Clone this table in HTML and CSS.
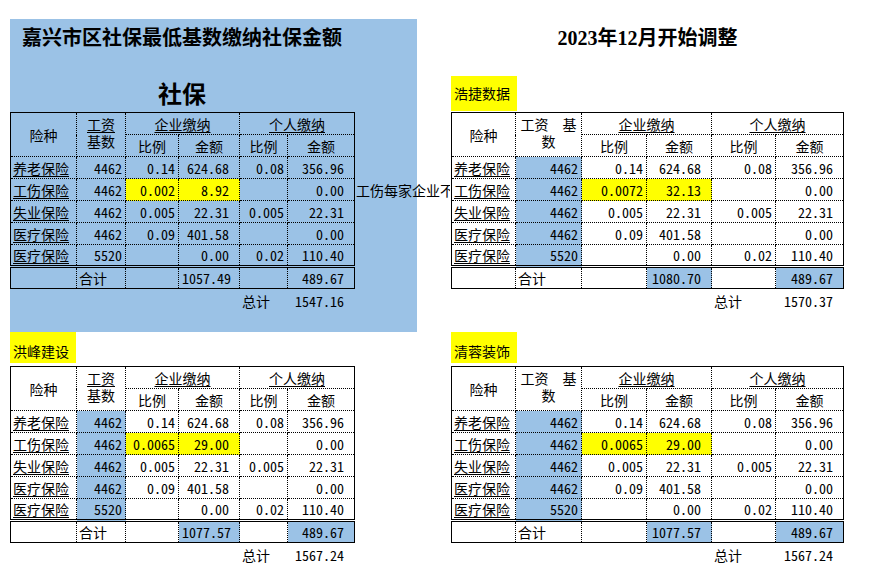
FILE: index.html
```html
<!DOCTYPE html>
<html lang="zh-CN">
<head>
<meta charset="utf-8">
<title>嘉兴市区社保最低基数缴纳社保金额</title>
<link rel="stylesheet" href="styles.css">
</head>
<body>
<div class="page">
  <section class="panel">
    <div class="title narrow-w">嘉兴市区社保最低基数缴纳社保金额</div>
    <div class="subtitle narrow-w">社保</div>
    <table class="sheet sheet-n plain">
      <colgroup><col class="n1"><col class="n2"><col class="n3"><col class="n4"><col class="n5"><col class="n6"></colgroup>
      <tr><td rowspan="2" class="hc">险种</td><td rowspan="2" class="hc two"><u>工资</u><br>基数</td><td colspan="2" class="hc"><u>企业缴纳</u></td><td colspan="2" class="hc"><u>个人缴纳</u></td></tr>
      <tr><td class="hc">比例</td><td class="hc">金额</td><td class="hc">比例</td><td class="hc">金额</td></tr>
      <tr><td class="lbl"><u>养老保险</u></td><td class="n">4462</td><td class="n">0.14</td><td class="n amt">624.68</td><td class="n">0.08</td><td class="n amt">356.96</td></tr>
      <tr><td class="lbl"><u>工伤保险</u></td><td class="n">4462</td><td class="n hl">0.002</td><td class="n amt hl">8.92</td><td class="n"></td><td class="n amt note-cell">0.00<span class="note">工伤每家企业不</span></td></tr>
      <tr><td class="lbl"><u>失业保险</u></td><td class="n">4462</td><td class="n">0.005</td><td class="n amt">22.31</td><td class="n">0.005</td><td class="n amt">22.31</td></tr>
      <tr><td class="lbl"><u>医疗保险</u></td><td class="n">4462</td><td class="n">0.09</td><td class="n amt">401.58</td><td class="n"></td><td class="n amt">0.00</td></tr>
      <tr><td class="lbl"><u>医疗保险</u></td><td class="n">5520</td><td class="n"></td><td class="n amt">0.00</td><td class="n">0.02</td><td class="n amt">110.40</td></tr>
      <tr class="sum"><td></td><td class="lbl">合计</td><td></td><td class="n amt">1057.49</td><td></td><td class="n amt">489.67</td></tr>
    </table>
    <div class="grand grand-n"><span></span><span class="gl">总计</span><span class="gv">1547.16</span></div>
  </section>

  <section class="col">
    <div class="title">2023年12月开始调整</div>
    <div class="tag tag-top">浩捷数据</div>
    <table class="sheet sheet-w">
      <colgroup><col class="w1"><col class="w2"><col class="w3"><col class="w4"><col class="w5"><col class="w6"></colgroup>
      <tr><td rowspan="2" class="hc">险种</td><td rowspan="2" class="hc two">工资　基<br>数</td><td colspan="2" class="hc"><u>企业缴纳</u></td><td colspan="2" class="hc"><u>个人缴纳</u></td></tr>
      <tr><td class="hc">比例</td><td class="hc">金额</td><td class="hc">比例</td><td class="hc">金额</td></tr>
      <tr><td class="lbl"><u>养老保险</u></td><td class="n bl">4462</td><td class="n">0.14</td><td class="n amt">624.68</td><td class="n">0.08</td><td class="n amt">356.96</td></tr>
      <tr><td class="lbl"><u>工伤保险</u></td><td class="n bl">4462</td><td class="n hl">0.0072</td><td class="n amt hl">32.13</td><td class="n"></td><td class="n amt">0.00</td></tr>
      <tr><td class="lbl"><u>失业保险</u></td><td class="n bl">4462</td><td class="n">0.005</td><td class="n amt">22.31</td><td class="n">0.005</td><td class="n amt">22.31</td></tr>
      <tr><td class="lbl"><u>医疗保险</u></td><td class="n bl">4462</td><td class="n">0.09</td><td class="n amt">401.58</td><td class="n"></td><td class="n amt">0.00</td></tr>
      <tr><td class="lbl"><u>医疗保险</u></td><td class="n bl">5520</td><td class="n"></td><td class="n amt">0.00</td><td class="n">0.02</td><td class="n amt">110.40</td></tr>
      <tr class="sum"><td></td><td class="lbl">合计</td><td></td><td class="n amt bl">1080.70</td><td></td><td class="n amt bl">489.67</td></tr>
    </table>
    <div class="grand grand-w"><span></span><span class="gl">总计</span><span class="gv">1570.37</span></div>
  </section>

  <section class="col">
    <div class="tag tag-bottom">洪峰建设</div>
    <table class="sheet sheet-n">
      <colgroup><col class="n1"><col class="n2"><col class="n3"><col class="n4"><col class="n5"><col class="n6"></colgroup>
      <tr><td rowspan="2" class="hc">险种</td><td rowspan="2" class="hc two"><u>工资</u><br>基数</td><td colspan="2" class="hc"><u>企业缴纳</u></td><td colspan="2" class="hc"><u>个人缴纳</u></td></tr>
      <tr><td class="hc">比例</td><td class="hc">金额</td><td class="hc">比例</td><td class="hc">金额</td></tr>
      <tr><td class="lbl"><u>养老保险</u></td><td class="n bl">4462</td><td class="n">0.14</td><td class="n amt">624.68</td><td class="n">0.08</td><td class="n amt">356.96</td></tr>
      <tr><td class="lbl"><u>工伤保险</u></td><td class="n bl">4462</td><td class="n hl">0.0065</td><td class="n amt hl">29.00</td><td class="n"></td><td class="n amt">0.00</td></tr>
      <tr><td class="lbl"><u>失业保险</u></td><td class="n bl">4462</td><td class="n">0.005</td><td class="n amt">22.31</td><td class="n">0.005</td><td class="n amt">22.31</td></tr>
      <tr><td class="lbl"><u>医疗保险</u></td><td class="n bl">4462</td><td class="n">0.09</td><td class="n amt">401.58</td><td class="n"></td><td class="n amt">0.00</td></tr>
      <tr><td class="lbl"><u>医疗保险</u></td><td class="n bl">5520</td><td class="n"></td><td class="n amt">0.00</td><td class="n">0.02</td><td class="n amt">110.40</td></tr>
      <tr class="sum"><td></td><td class="lbl">合计</td><td></td><td class="n amt bl">1077.57</td><td></td><td class="n amt bl">489.67</td></tr>
    </table>
    <div class="grand grand-n"><span></span><span class="gl">总计</span><span class="gv">1567.24</span></div>
  </section>

  <section class="col">
    <div class="tag tag-bottom">清蓉装饰</div>
    <table class="sheet sheet-w">
      <colgroup><col class="w1"><col class="w2"><col class="w3"><col class="w4"><col class="w5"><col class="w6"></colgroup>
      <tr><td rowspan="2" class="hc">险种</td><td rowspan="2" class="hc two">工资　基<br>数</td><td colspan="2" class="hc"><u>企业缴纳</u></td><td colspan="2" class="hc"><u>个人缴纳</u></td></tr>
      <tr><td class="hc">比例</td><td class="hc">金额</td><td class="hc">比例</td><td class="hc">金额</td></tr>
      <tr><td class="lbl"><u>养老保险</u></td><td class="n bl">4462</td><td class="n">0.14</td><td class="n amt">624.68</td><td class="n">0.08</td><td class="n amt">356.96</td></tr>
      <tr><td class="lbl"><u>工伤保险</u></td><td class="n bl">4462</td><td class="n hl">0.0065</td><td class="n amt hl">29.00</td><td class="n"></td><td class="n amt">0.00</td></tr>
      <tr><td class="lbl"><u>失业保险</u></td><td class="n bl">4462</td><td class="n">0.005</td><td class="n amt">22.31</td><td class="n">0.005</td><td class="n amt">22.31</td></tr>
      <tr><td class="lbl"><u>医疗保险</u></td><td class="n bl">4462</td><td class="n">0.09</td><td class="n amt">401.58</td><td class="n"></td><td class="n amt">0.00</td></tr>
      <tr><td class="lbl"><u>医疗保险</u></td><td class="n bl">5520</td><td class="n"></td><td class="n amt">0.00</td><td class="n">0.02</td><td class="n amt">110.40</td></tr>
      <tr class="sum"><td></td><td class="lbl">合计</td><td></td><td class="n amt bl">1077.57</td><td></td><td class="n amt bl">489.67</td></tr>
    </table>
    <div class="grand grand-w"><span></span><span class="gl">总计</span><span class="gv">1567.24</span></div>
  </section>
</div>
</body>
</html>
```

FILE: styles.css
```css
* { box-sizing: border-box; }
html, body { margin: 0; background: #fff; }
body {
  font-family: "Noto Sans CJK SC", sans-serif;
  font-size: 14px;
  color: #000;
}
.page {
  display: grid;
  grid-template-columns: 407px 393px;
  grid-template-rows: 313px 250px;
  column-gap: 34px;
  padding: 19px 0 0 10px;
}
.panel { background: #9bc2e6; }
.col { display: flex; flex-direction: column; }
.narrow-w { width: 344px; }
.title {
  height: 38px;
  line-height: 38px;
  text-align: center;
  font-family: "Liberation Serif", "Noto Sans CJK SC", serif;
  font-weight: 700;
  font-size: 20px;
  white-space: nowrap;
}
.subtitle {
  height: 55px;
  padding-top: 21px;
  line-height: 30px;
  font-size: 24px;
  font-weight: 700;
  text-align: center;
}
.tag {
  width: 66px;
  background: #ff0;
  display: flex;
  align-items: flex-end;
  padding-left: 3px;
  line-height: 20px;
  flex: none;
}
.tag-top { height: 35px; margin-top: 19px; padding-bottom: 8px; margin-bottom: 1px; }
.tag-bottom { height: 31px; padding-bottom: 2px; margin-bottom: 3px; }

.sheet {
  border-collapse: collapse;
  table-layout: fixed;
  border: 1px solid #000;
  background: #fff;
}
.sheet.plain { background: transparent; }
.sheet-n { width: 344px; }
.sheet-w { width: 392px; }
.n1 { width: 66px; } .n2 { width: 49px; } .n3 { width: 53px; }
.n4 { width: 61px; } .n5 { width: 48px; } .n6 { width: 67px; }
.w1 { width: 64px; } .w2 { width: 66px; } .w3 { width: 65px; }
.w4 { width: 65px; } .w5 { width: 64px; } .w6 { width: 68px; }

.sheet td {
  border: 1px dotted #000;
  height: 22px;
  padding: 0 3px;
  white-space: nowrap;
  line-height: 16px;
  vertical-align: middle;
}
.sheet .hc { text-align: center; }
.sheet .two { line-height: 17px; padding-bottom: 3px; }
.sheet .lbl { text-align: left; padding-left: 2px; }
.sheet u { text-decoration-thickness: 1px; text-underline-offset: 2px; }
.sheet .n {
  text-align: right;
  font-feature-settings: "hwid" 1;
  padding-right: 3px;
}
.sheet .amt { padding-right: 10px; }
.sheet .hl { background: #ff0; }
.sheet .bl { background: #9bc2e6; }
.sheet .sum td { border-top: 3px double #000; }

.note-cell { position: relative; }
.note {
  position: absolute;
  left: 100%;
  top: 0;
  bottom: 0;
  margin-left: 2px;
  width: 94px;
  overflow: hidden;
  text-align: left;
  display: flex;
  align-items: center;
  font-feature-settings: normal;
}

.grand {
  display: grid;
  height: 24px;
  align-items: center;
  font-feature-settings: "hwid" 1;
}
.grand-n { grid-template-columns: 229px 48px 67px; width: 344px; }
.grand-w { grid-template-columns: 260px 64px 68px; width: 392px; }
.grand .gl { padding-left: 3px; }
.grand .gv { text-align: right; padding-right: 10px; }
```
